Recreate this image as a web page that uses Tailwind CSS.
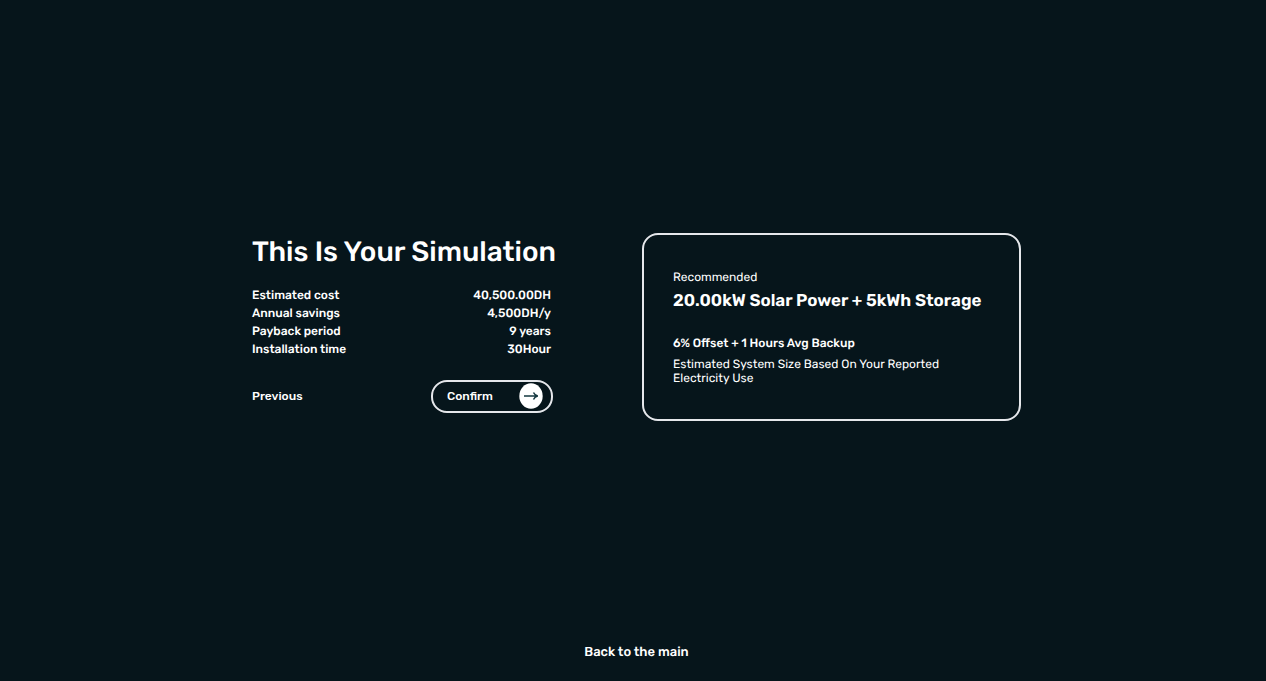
<!DOCTYPE html>
<html lang="en">
<head>
<meta charset="utf-8">
<meta name="viewport" content="width=device-width, initial-scale=1">
<title>Simulation</title>
<script src="https://cdn.jsdelivr.net/npm/@tailwindcss/browser@4"></script>
</head>
<body class="flex min-h-screen flex-col bg-[#06151b] pl-[7px] font-[Rubik,Roboto,sans-serif] text-white [text-rendering:geometricPrecision]">
<main class="flex flex-1 flex-wrap items-center justify-center gap-x-[87px] gap-y-10 pt-2.5">
  <section class="w-[303px] pb-2">
    <h1 class="text-[28px] leading-9 font-medium whitespace-nowrap">This Is Your Simulation</h1>
    <dl class="mt-4 pr-1 text-[12px] leading-[18px] font-medium">
      <div class="flex justify-between"><dt>Estimated cost</dt><dd>40,500.00DH</dd></div>
      <div class="flex justify-between"><dt>Annual savings</dt><dd>4,500DH/y</dd></div>
      <div class="flex justify-between"><dt>Payback period</dt><dd>9 years</dd></div>
      <div class="flex justify-between"><dt>Installation time</dt><dd>30Hour</dd></div>
    </dl>
    <div class="mt-[22px] flex items-center justify-between pr-0.5 text-[12px] font-medium">
      <button type="button">Previous</button>
      <button type="button" class="flex h-[33px] w-[122px] items-center justify-between rounded-2xl border-2 border-gray-200 pr-2 pl-3.5">
        Confirm
        <svg class="h-[26px] w-6" viewBox="0 0 24 26" fill="none" aria-hidden="true">
          <ellipse cx="12" cy="13" rx="11.7" ry="12.7" fill="#fff"/>
          <path d="M5 13H18.5M14.5 9.5Q15.8 12.4 18.8 13Q15.8 13.6 14.5 16.5" stroke="#153840" stroke-width="1.5"/>
        </svg>
      </button>
    </div>
  </section>
  <section class="w-[379px] rounded-2xl border-2 border-gray-200 pt-[34px] pr-7 pb-[34px] pl-[29px]">
    <p class="text-[12px] leading-4">Recommended</p>
    <h2 class="mt-1 text-[17px] leading-6 font-semibold whitespace-nowrap">20.00kW Solar Power + 5kWh Storage</h2>
    <p class="mt-[22px] text-[12px] leading-4 font-medium">6% Offset + 1 Hours Avg Backup</p>
    <p class="mt-1.5 max-w-[280px] text-[12px] leading-3.5">Estimated System Size Based On Your Reported Electricity Use</p>
  </section>
</main>
<footer class="flex justify-center pb-[19px]">
  <a href="#" class="text-[13px] leading-[18px] font-medium">Back to the main</a>
</footer>
</body>
</html>
